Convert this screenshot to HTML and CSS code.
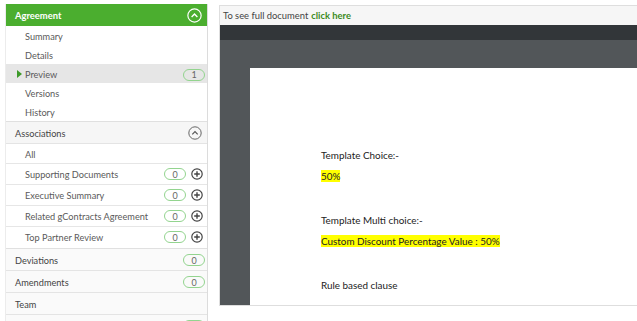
FILE: index.html
```html
<!DOCTYPE html>
<html>
<head>
<meta charset="utf-8">
<link rel="stylesheet" href="styles.css">
</head>
<body>
<div class="sidebar">
  <div class="sec-head green">
    <span>Agreement</span>
    <svg class="chev" width="15" height="15" viewBox="0 0 14 14"><circle cx="7" cy="7" r="6.2" fill="none" stroke="#fff" stroke-width="1.1"/><path d="M4.3 8.3 L7 5.6 L9.7 8.3" fill="none" stroke="#fff" stroke-width="1.3"/></svg>
  </div>
  <div class="items">
    <div class="item">Summary</div>
    <div class="item">Details</div>
    <div class="item active"><span class="arrow"></span>Preview<span class="badge b-right">1</span></div>
    <div class="item">Versions</div>
    <div class="item">History</div>
  </div>
  <div class="sec-head gray">
    <span>Associations</span>
    <svg class="chev" width="14" height="14" viewBox="0 0 14 14"><circle cx="7" cy="7" r="6.2" fill="none" stroke="#666" stroke-width="1"/><path d="M4.3 8.3 L7 5.6 L9.7 8.3" fill="none" stroke="#555" stroke-width="1.2"/></svg>
  </div>
  <div class="assoc">
    <div class="aitem first">All</div>
    <div class="aitem"><span class="lbl">Supporting Documents</span><span class="badge">0</span><svg class="plus" width="12" height="12" viewBox="0 0 12 12"><circle cx="6" cy="6" r="5.2" fill="none" stroke="#444" stroke-width="1.2"/><path d="M6 3.2V8.8M3.2 6H8.8" stroke="#444" stroke-width="1.4"/></svg></div>
    <div class="aitem"><span class="lbl">Executive Summary</span><span class="badge">0</span><svg class="plus" width="12" height="12" viewBox="0 0 12 12"><circle cx="6" cy="6" r="5.2" fill="none" stroke="#444" stroke-width="1.2"/><path d="M6 3.2V8.8M3.2 6H8.8" stroke="#444" stroke-width="1.4"/></svg></div>
    <div class="aitem"><span class="lbl">Related gContracts Agreement</span><span class="badge">0</span><svg class="plus" width="12" height="12" viewBox="0 0 12 12"><circle cx="6" cy="6" r="5.2" fill="none" stroke="#444" stroke-width="1.2"/><path d="M6 3.2V8.8M3.2 6H8.8" stroke="#444" stroke-width="1.4"/></svg></div>
    <div class="aitem"><span class="lbl">Top Partner Review</span><span class="badge">0</span><svg class="plus" width="12" height="12" viewBox="0 0 12 12"><circle cx="6" cy="6" r="5.2" fill="none" stroke="#444" stroke-width="1.2"/><path d="M6 3.2V8.8M3.2 6H8.8" stroke="#444" stroke-width="1.4"/></svg></div>
  </div>
  <div class="row"><span>Deviations</span><span class="badge">0</span></div>
  <div class="row"><span>Amendments</span><span class="badge">0</span></div>
  <div class="row"><span>Team</span></div>
  <div class="row"><span></span><span class="badge"></span></div>
</div>
<div class="viewer">
  <div class="topbar">To see full document <a class="link">click here</a></div>
  <div class="toolbar"></div>
  <div class="canvas">
    <div class="page">
      <p class="line">Template Choice:-</p>
      <p class="line"><mark>50%</mark></p>
      <p class="line gap">Template Multi choice:-</p>
      <p class="line"><mark>Custom Discount Percentage Value : 50%</mark></p>
      <p class="line gap">Rule based clause</p>
    </div>
  </div>
</div>
</body>
</html>
```

FILE: styles.css
```css
html, body { margin: 0; padding: 0; background: #fff; }
body {
  display: flex;
  align-items: flex-start;
  padding: 4px 0 0 5px;
  font-family: Lato, "Open Sans", sans-serif;
  font-size: 9.2px;
  color: #555;
  height: 321px;
  box-sizing: border-box;
  overflow: hidden;
  white-space: nowrap;
}
.sidebar {
  width: 201px;
  height: 317px;
  overflow: hidden;
  border-right: 1px solid #dcdcdc;
  border-left: 1px solid #ececec;
  flex: none;
}
.sec-head {
  display: flex;
  align-items: center;
  justify-content: space-between;
  box-sizing: border-box;
  padding: 1px 5px 0 9px;
}
.sec-head.green {
  height: 22px;
  background: #4bae2f;
  color: #fff;
  font-weight: 700;
  font-size: 9.4px;
}
.sec-head.gray {
  height: 22px;
  background: #f6f6f6;
  border-bottom: 1px solid #e4e4e4;
  color: #444;
  font-size: 9.2px;
}
.items { border-bottom: 1px solid #e0e0e0; }
.item {
  height: 19px;
  box-sizing: border-box;
  padding: 2px 0 0 19px;
  display: flex;
  align-items: center;
  position: relative;
  color: #5a5a5a;
}
.item.active { background: #e6e6e6; }
.arrow {
  position: absolute;
  left: 11px;
  top: 6px;
  width: 0; height: 0;
  border-left: 5px solid #3d9a2a;
  border-top: 4px solid transparent;
  border-bottom: 4px solid transparent;
}
.badge {
  display: inline-flex;
  align-items: center;
  justify-content: center;
  width: 20px;
  height: 10px;
  border: 1.5px solid #93d48f;
  border-radius: 8px;
  font-size: 9px;
  color: #666;
  line-height: 1;
}
.b-right { margin-left: auto; margin-right: 2px; }
.assoc { border-bottom: 1px solid #e0e0e0; padding-bottom: 1px; }
.aitem {
  height: 21px;
  box-sizing: border-box;
  display: flex;
  align-items: center;
  padding: 0 4px 0 19px;
  border-top: 1px solid #e6e6e6;
  color: #5a5a5a;
}
.aitem.first { border-top: none; height: 19px; padding-top: 1px; }
.aitem .lbl { flex: 1; }
.aitem .plus { margin-left: 5px; }
.row {
  height: 22px;
  box-sizing: border-box;
  display: flex;
  align-items: center;
  justify-content: space-between;
  padding: 1px 2px 0 9px;
  border-bottom: 1px solid #e4e4e4;
  background: #fafafa;
  color: #444;
  font-size: 9.2px;
}
.viewer {
  margin: 1px 0 0 11px;
  flex: 1;
  height: 299px;
  border: 1px solid #dedede;
  border-right: none;
  display: flex;
  flex-direction: column;
  overflow: hidden;
}
.topbar {
  height: 19px;
  background: #f6f6f6;
  display: flex;
  align-items: center;
  padding-left: 3px;
  color: #444;
  font-size: 9.4px;
}
.link { color: #3b8a1c; font-weight: 700; margin-left: 3px; }
.toolbar { height: 15px; background: #323639; flex: none; }
.canvas {
  flex: 1;
  background: #525659;
  padding: 28px 0 0 30px;
  display: flex;
}
.page {
  flex: 1;
  background: #fff;
  padding: 81px 0 0 71px;
  font-family: Lato, "Open Sans", sans-serif;
  font-size: 9.9px;
  color: #222;
}
.line { margin: 0 0 8px; line-height: 13px; }
.line.gap { margin-top: 31px; }
mark { background: #ffff00; color: #222; }
```
